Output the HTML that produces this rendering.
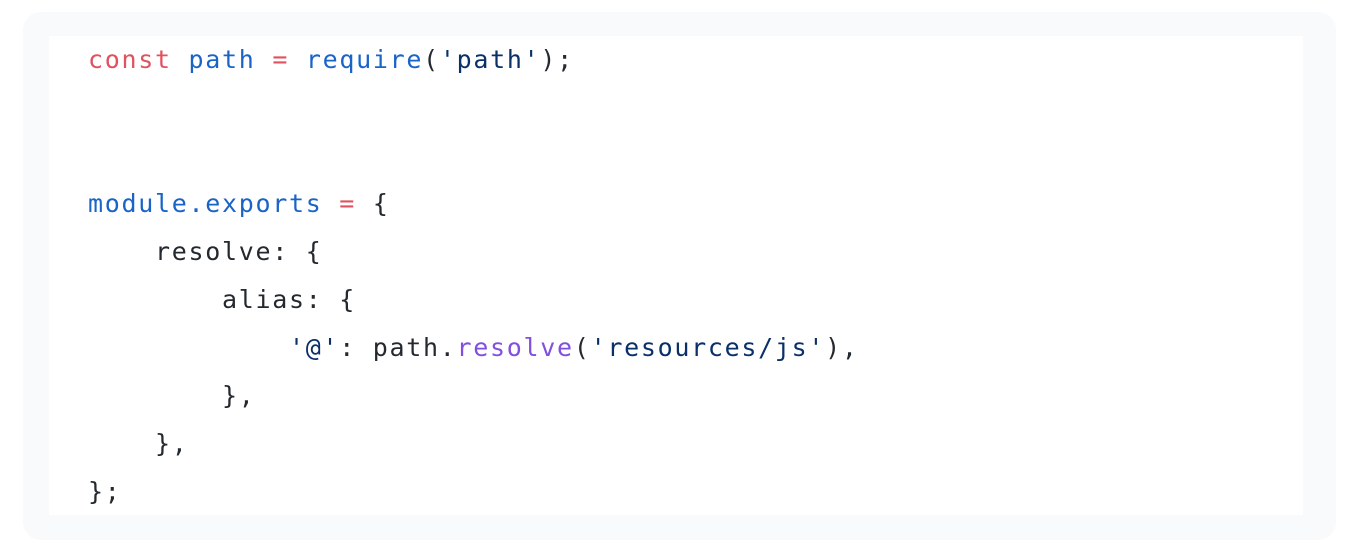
<!DOCTYPE html>
<html><head><meta charset="utf-8"><style>
html,body{margin:0;padding:0;background:#fff;width:1360px;height:557px;overflow:hidden}
.outer{position:absolute;left:23px;top:12px;width:1313px;height:528px;background:#f9fafb;border-radius:18px}
.inner{position:absolute;left:49px;top:36px;width:1254px;height:479px;background:#fff}
pre{position:absolute;left:88px;top:36px;margin:0;font-family:"DejaVu Sans Mono","Liberation Mono",monospace;font-size:25px;line-height:48px;color:#24292f;letter-spacing:1.7px}
.k{color:#e0525f}.b{color:#1a64c8}.s{color:#0a3069}.p{color:#8250df}
</style></head><body>
<div class="outer"></div><div class="inner"></div>
<pre><span class="k">const</span> <span class="b">path</span> <span class="k">=</span> <span class="b">require</span>(<span class="s">'path'</span>);


<span class="b">module.exports</span> <span class="k">=</span> {
    resolve: {
        alias: {
            <span class="s">'@'</span>: path.<span class="p">resolve</span>(<span class="s">'resources/js'</span>),
        },
    },
};</pre>
</body></html>
